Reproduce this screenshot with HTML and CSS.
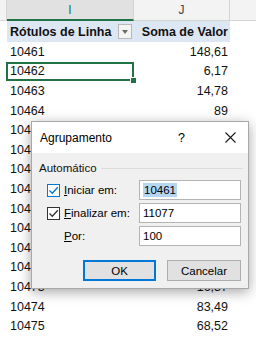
FILE: index.html
```html
<!DOCTYPE html>
<html lang="pt">
<head>
	<meta charset="UTF-8">
	<title>Agrupamento</title>
	<link rel="stylesheet" href="styles.css">
</head>
<body>
	<div class="sheet">
		<div class="colheads">
			<div class="ch edge"></div>
			<div class="ch col-i sel">I</div>
			<div class="ch col-j">J</div>
			<div class="ch rest"></div>
		</div>

		<div class="grid">
			<div class="row head">
				<div class="cell col-i">Rótulos de Linha<span class="drop"></span></div>
				<div class="cell col-j num">Soma de Valor</div>
			</div>
			<div class="row"><div class="cell col-i">10461</div><div class="cell col-j num">148,61</div></div>
			<div class="row"><div class="cell col-i active">10462</div><div class="cell col-j num">6,17</div></div>
			<div class="row"><div class="cell col-i">10463</div><div class="cell col-j num">14,78</div></div>
			<div class="row"><div class="cell col-i">10464</div><div class="cell col-j num">89</div></div>
			<div class="row"><div class="cell col-i">10465</div><div class="cell col-j num"></div></div>
			<div class="row"><div class="cell col-i">10466</div><div class="cell col-j num"></div></div>
			<div class="row"><div class="cell col-i">10467</div><div class="cell col-j num"></div></div>
			<div class="row"><div class="cell col-i">10468</div><div class="cell col-j num"></div></div>
			<div class="row"><div class="cell col-i">10469</div><div class="cell col-j num"></div></div>
			<div class="row"><div class="cell col-i">10470</div><div class="cell col-j num"></div></div>
			<div class="row"><div class="cell col-i">10471</div><div class="cell col-j num"></div></div>
			<div class="row"><div class="cell col-i">10472</div><div class="cell col-j num"></div></div>
			<div class="row"><div class="cell col-i">10473</div><div class="cell col-j num">16,37</div></div>
			<div class="row"><div class="cell col-i">10474</div><div class="cell col-j num">83,49</div></div>
			<div class="row"><div class="cell col-i">10475</div><div class="cell col-j num">68,52</div></div>
		</div>
	</div>

	<!-- janela Agrupamento por cima da planilha -->
	<div class="dialog">
		<div class="titlebar">
			<span class="title">Agrupamento</span>
			<span class="help">?</span>
			<span class="close">
				<svg width="11" height="11" viewBox="0 0 11 11"><path d="M0.5 0.5 L10.5 10.5 M10.5 0.5 L0.5 10.5" stroke="#1a1a1a" stroke-width="1.1" fill="none"/></svg>
			</span>
		</div>
		<div class="body">
			<div class="group"><span>Automático</span><i></i></div>
			<div class="field">
				<label><span class="check focus"><svg width="11" height="11" viewBox="0 0 11 11"><path d="M1.5 5.5 L4.3 8.3 L9.8 2.3" stroke="#0078d7" stroke-width="1.3" fill="none"/></svg></span><u>I</u>niciar em:</label>
				<div class="input"><span class="selected">10461</span></div>
			</div>
			<div class="field">
				<label><span class="check"><svg width="11" height="11" viewBox="0 0 11 11"><path d="M1.5 5.5 L4.3 8.3 L9.8 2.3" stroke="#333" stroke-width="1.3" fill="none"/></svg></span><u>F</u>inalizar em:</label>
				<div class="input">11077</div>
			</div>
			<div class="field">
				<label class="plain"><u>P</u>or:</label>
				<div class="input">100</div>
			</div>
			<div class="buttons">
				<button class="btn default">OK</button>
				<button class="btn">Cancelar</button>
			</div>
		</div>
	</div>
</body>
</html>
```

FILE: styles.css
```css
body {
	margin: 0;
	width: 256px;
	height: 337px;
	overflow: hidden;
	background: #fff;
	font-family: "Liberation Sans", Arial, sans-serif;
}

/* cabeçalho das colunas */
.colheads {
	display: flex;
	height: 21px;
	background: #f3f3f3;
	border-bottom: 1px solid #d4d4d4;
	box-sizing: border-box;
}
.ch {
	box-sizing: border-box;
	border-right: 1px solid #d4d4d4;
	font-size: 12px;
	color: #444;
	text-align: center;
	line-height: 20px;
}
.ch.edge {
	width: 7px;
}
.ch.col-i {
	width: 127px;
}
.ch.col-j {
	width: 96px;
}
.ch.rest {
	flex: 1;
	border-right: 0;
}
.ch.sel {
	background: #e1e1e1;
	color: #217346;
	border-bottom: 2px solid #217346;
	height: 21px;
}

/* células */
.grid {
	padding-left: 7px;
}
.row {
	display: flex;
	height: 19.6px;
	align-items: center;
	font-size: 12.5px;
	color: #111;
}
.row.head {
	height: 21px;
	font-weight: bold;
	background: #dde6f3;
	width: 223px;
}
.cell {
	box-sizing: border-box;
	height: 100%;
	display: flex;
	align-items: center;
	padding: 0 2px 0 3px;
}
.cell.col-i {
	width: 127px;
}
.cell.col-j {
	width: 96px;
}
.num {
	justify-content: flex-end;
}
.head .col-i {
	justify-content: space-between;
}
.drop {
	width: 14px;
	height: 15px;
	box-sizing: border-box;
	border: 1px solid #b8b8b8;
	background: #f4f4f4;
	position: relative;
}
.drop::after {
	content: "";
	position: absolute;
	left: 3px;
	top: 5px;
	border-left: 3.5px solid transparent;
	border-right: 3.5px solid transparent;
	border-top: 4px solid #6a6a6a;
}
.cell.active {
	position: relative;
	box-shadow: inset 0 0 0 2px #217346;
	margin-left: -1px;
	width: 128px;
	padding-left: 4px;
}
.cell.active::after {
	content: "";
	position: absolute;
	right: -3px;
	bottom: -3px;
	width: 5px;
	height: 5px;
	background: #217346;
	border: 1px solid #fff;
}

/* janela de diálogo */
.dialog {
	position: absolute;
	left: 31px;
	top: 121px;
	width: 218px;
	height: 168px;
	box-sizing: border-box;
	border: 1px solid #a8a8a8;
	background: #f0f0f0;
	box-shadow: 0 3px 12px rgba(0, 0, 0, 0.35);
	font-family: "Liberation Sans", Arial, sans-serif;
	font-size: 11.5px;
	color: #000;
	display: flex;
	flex-direction: column;
}
.titlebar {
	height: 31px;
	background: #fff;
	display: flex;
	align-items: center;
	padding-left: 8px;
	font-size: 12px;
}
.title {
	flex: 1;
}
.help {
	width: 14px;
	margin-right: 33px;
	font-size: 12.5px;
}
.close {
	display: flex;
	margin-right: 12px;
}
.body {
	flex: 1;
	padding: 8px 7px 0 7px;
}
.group {
	display: flex;
	align-items: center;
	gap: 4px;
	height: 14px;
	margin-bottom: 5px;
	color: #111;
}
.group i {
	flex: 1;
	height: 1px;
	background: #dcdcdc;
	margin-right: -2px;
}
.field {
	display: flex;
	align-items: center;
	height: 20px;
	margin-bottom: 3px;
}
.field label {
	flex: 1;
	display: flex;
	align-items: center;
	padding-left: 8px;
}
.field label.plain {
	padding-left: 25px;
}
.check {
	width: 13px;
	height: 13px;
	box-sizing: border-box;
	border: 1px solid #333;
	background: #fff;
	margin-right: 4px;
	display: flex;
	align-items: center;
	justify-content: center;
}
.check.focus {
	border-color: #0078d7;
}
.check svg {
	display: block;
}
.input {
	width: 102px;
	height: 20px;
	box-sizing: border-box;
	border: 1px solid #b4b4b4;
	background: #fff;
	padding-left: 3px;
	display: flex;
	align-items: center;
	font-size: 11.5px;
}
.selected {
	background: #b5d6f3;
	padding: 1px 1px;
}
.buttons {
	display: flex;
	justify-content: flex-end;
	gap: 11px;
	margin-top: 14px;
}
.btn {
	width: 74px;
	height: 21px;
	box-sizing: border-box;
	border: 1px solid #adadad;
	background: #e1e1e1;
	font-family: "Liberation Sans", Arial, sans-serif;
	font-size: 11.5px;
	color: #000;
	padding: 0;
}
.btn.default {
	border: 2px solid #0078d7;
	width: 73px;
}
```
